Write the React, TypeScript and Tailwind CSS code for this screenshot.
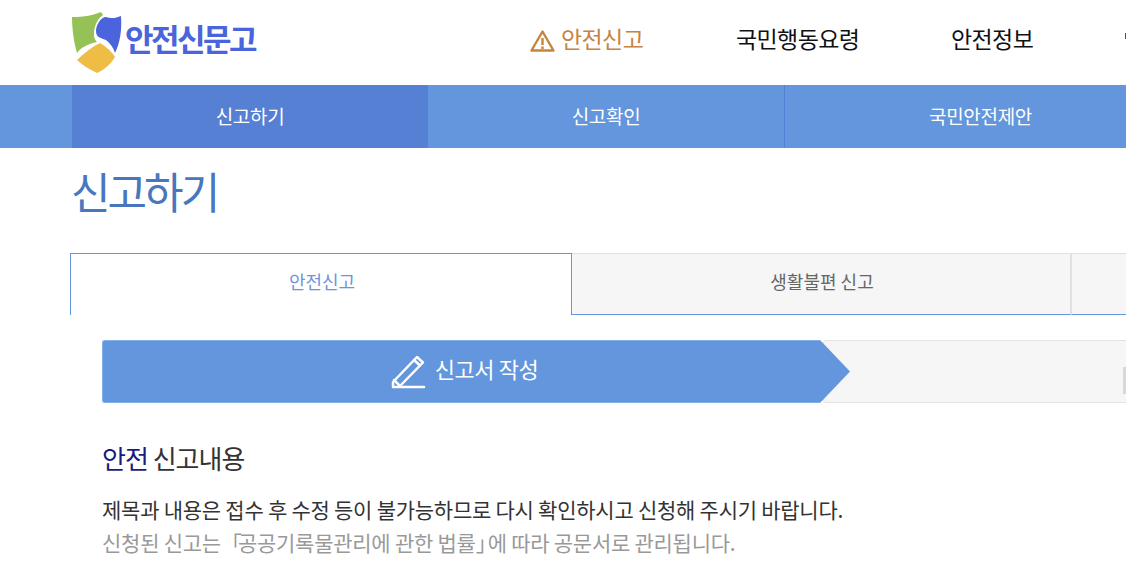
import React from 'react';

const KO = "font-['Noto_Sans_CJK_KR','Noto_Sans',sans-serif]";

const Logo = () => (
  <svg width="50" height="63" viewBox="0 0 50 63" className="shrink-0 ml-[2px]">
    <path d="M0 6 C12 6 22 4 29 1 L31 4 C24 9 22 17 22 23 C22 27 23 29 25 31 C16 33 8 37 5 42 C2 32 0 18 0 6 Z" fill="#95c157" />
    <path d="M34 6 C39 8 44 7 49 5 C50 19 48 32 43 42 C41 36 38 32 34 29 C28 27 24 26 24 20 C24 14 29 6 34 6 Z" fill="#4a65dc" />
    <path d="M5 49 C12 42 20 36 28 32 C35 36 40 41 43 46 C39 53 32 59 25 62 C17 58 10 54 5 49 Z" fill="#eebd45" />
  </svg>
);

const WarnIcon = () => (
  <svg width="25" height="24" viewBox="0 0 25 24" fill="none" stroke="#c6843f" strokeWidth="2.4" strokeLinejoin="round" className="shrink-0 mt-[4px]">
    <path d="M12.5 2.5 L23.5 21.5 H1.5 Z" />
    <path d="M12.5 9 V16" />
    <path d="M12.5 17.5 V20" />
  </svg>
);

const PencilIcon = () => (
  <svg width="35" height="35" viewBox="0 0 35 35" fill="none" stroke="#fff" strokeWidth="2.5" strokeLinejoin="round" strokeLinecap="round" className="shrink-0">
    <path d="M2 28 L26 3 L32 8.5 L8 33 H2 Z" />
    <path d="M23 6 L29 11.5" />
    <path d="M3 26 L9 32" />
    <path d="M9 33 H33" />
  </svg>
);

export default function App() {
  return (
    <div className={`w-[1126px] h-[582px] overflow-hidden bg-white ${KO}`}>
      {/* Header */}
      <header className="h-[85px] flex items-center pl-[70px]">
        <div className="flex items-center w-[460px] shrink-0 -mt-[1px]">
          <Logo />
          <span className="ml-[3px] -mt-[8px] text-[31px] font-bold text-[#4a65dc] tracking-[-2.5px] whitespace-nowrap">안전신문고</span>
        </div>
        <nav className="flex items-center -mt-[8px] text-[23px] tracking-[-0.6px] text-[#111] whitespace-nowrap">
          <a className="flex items-center gap-[6px] w-[206px] shrink-0 text-[#c6843f]">
            <WarnIcon />
            안전신고
          </a>
          <a className="w-[215px] shrink-0">국민행동요령</a>
          <a className="w-[170px] shrink-0">안전정보</a>
          <span className="ml-[4px] -mt-[6px] w-[1px] h-[6px] shrink-0 bg-[#7a4a10]" />
        </nav>
      </header>

      {/* Sub nav */}
      <div className="h-[63px] bg-[#6396dc] flex pl-[72px] text-white text-[19px] tracking-[-0.3px] whitespace-nowrap">
        <a className="w-[356px] shrink-0 bg-[#5680d3] flex items-center justify-center">신고하기</a>
        <a className="w-[357px] shrink-0 flex items-center justify-center border-r border-[#5680d3]">신고확인</a>
        <a className="w-[391px] shrink-0 flex items-center justify-center">국민안전제안</a>
      </div>

      <main className="pl-[70px]">
        <h1 className="mt-[13px] ml-[1px] text-[43px] leading-[58px] tracking-[-3px] text-[#4877bd]">신고하기</h1>

        {/* Tabs */}
        <div className="mt-[34px] h-[62px] flex text-[18px] whitespace-nowrap">
          <div className="w-[502px] shrink-0 border-x border-t border-[#6396dc] flex items-center justify-center pb-[6px] pl-[2px] text-[#6f94dc]">안전신고</div>
          <div className="w-[500px] shrink-0 bg-[#f6f6f6] border-t border-[#e0e0e0] border-b border-b-[#6396dc] border-r-2 border-r-[#e0e0e0] flex items-center justify-center pb-[6px] pl-[2px] text-[#666]">생활불편 신고</div>
          <div className="flex-1 bg-[#f6f6f6] border-t border-[#e0e0e0] border-b border-b-[#6396dc]" />
        </div>

        {/* Step bar */}
        <div className="mt-[25px] ml-[32px] h-[63px] relative flex">
          <div className="w-[718px] shrink-0 rounded-l-[3px] bg-[#6396dc] border-l border-b border-t border-[#7fb0ea] flex items-center justify-center gap-[9px] text-white text-[22px] tracking-[-0.4px] pl-[6px] whitespace-nowrap">
            <PencilIcon />
            <span className="-mt-[6px]">신고서 작성</span>
          </div>
          <div className="flex-1 ml-[3px] bg-[#f6f6f6] border border-r-0 border-[#e4e4e4] rounded-l-[3px] flex items-start justify-end">
            <div className="mt-[26px] w-[3px] h-[27px] bg-[#d8d8d8]" />
          </div>
          <div className="absolute left-[718px] top-0 w-[30px] h-[63px] bg-[#6396dc] [clip-path:polygon(0_0,100%_50%,0_100%)]" />
        </div>

        {/* Content */}
        <section className="ml-[32px] mt-[34px]">
          <h2 className="text-[26px] leading-[42px] tracking-[-1px] text-[#333]">
            <span className="text-[#1a1a80]">안전</span> 신고내용
          </h2>
          <p className="mt-[14px] text-[21px] leading-[33px] tracking-[-0.25px] text-[#333] whitespace-nowrap">제목과 내용은 접수 후 수정 등이 불가능하므로 다시 확인하시고 신청해 주시기 바랍니다.</p>
          <p className="text-[21px] leading-[33px] tracking-[-0.25px] text-[#999] whitespace-nowrap">
            신청된 신고는<span className="tracking-[-4px]">「</span>공공기록물관리에 관한 법률<span className="tracking-[-9px]">」</span>에 따라 공문서로 관리됩니다.
          </p>
        </section>
      </main>
    </div>
  );
}
